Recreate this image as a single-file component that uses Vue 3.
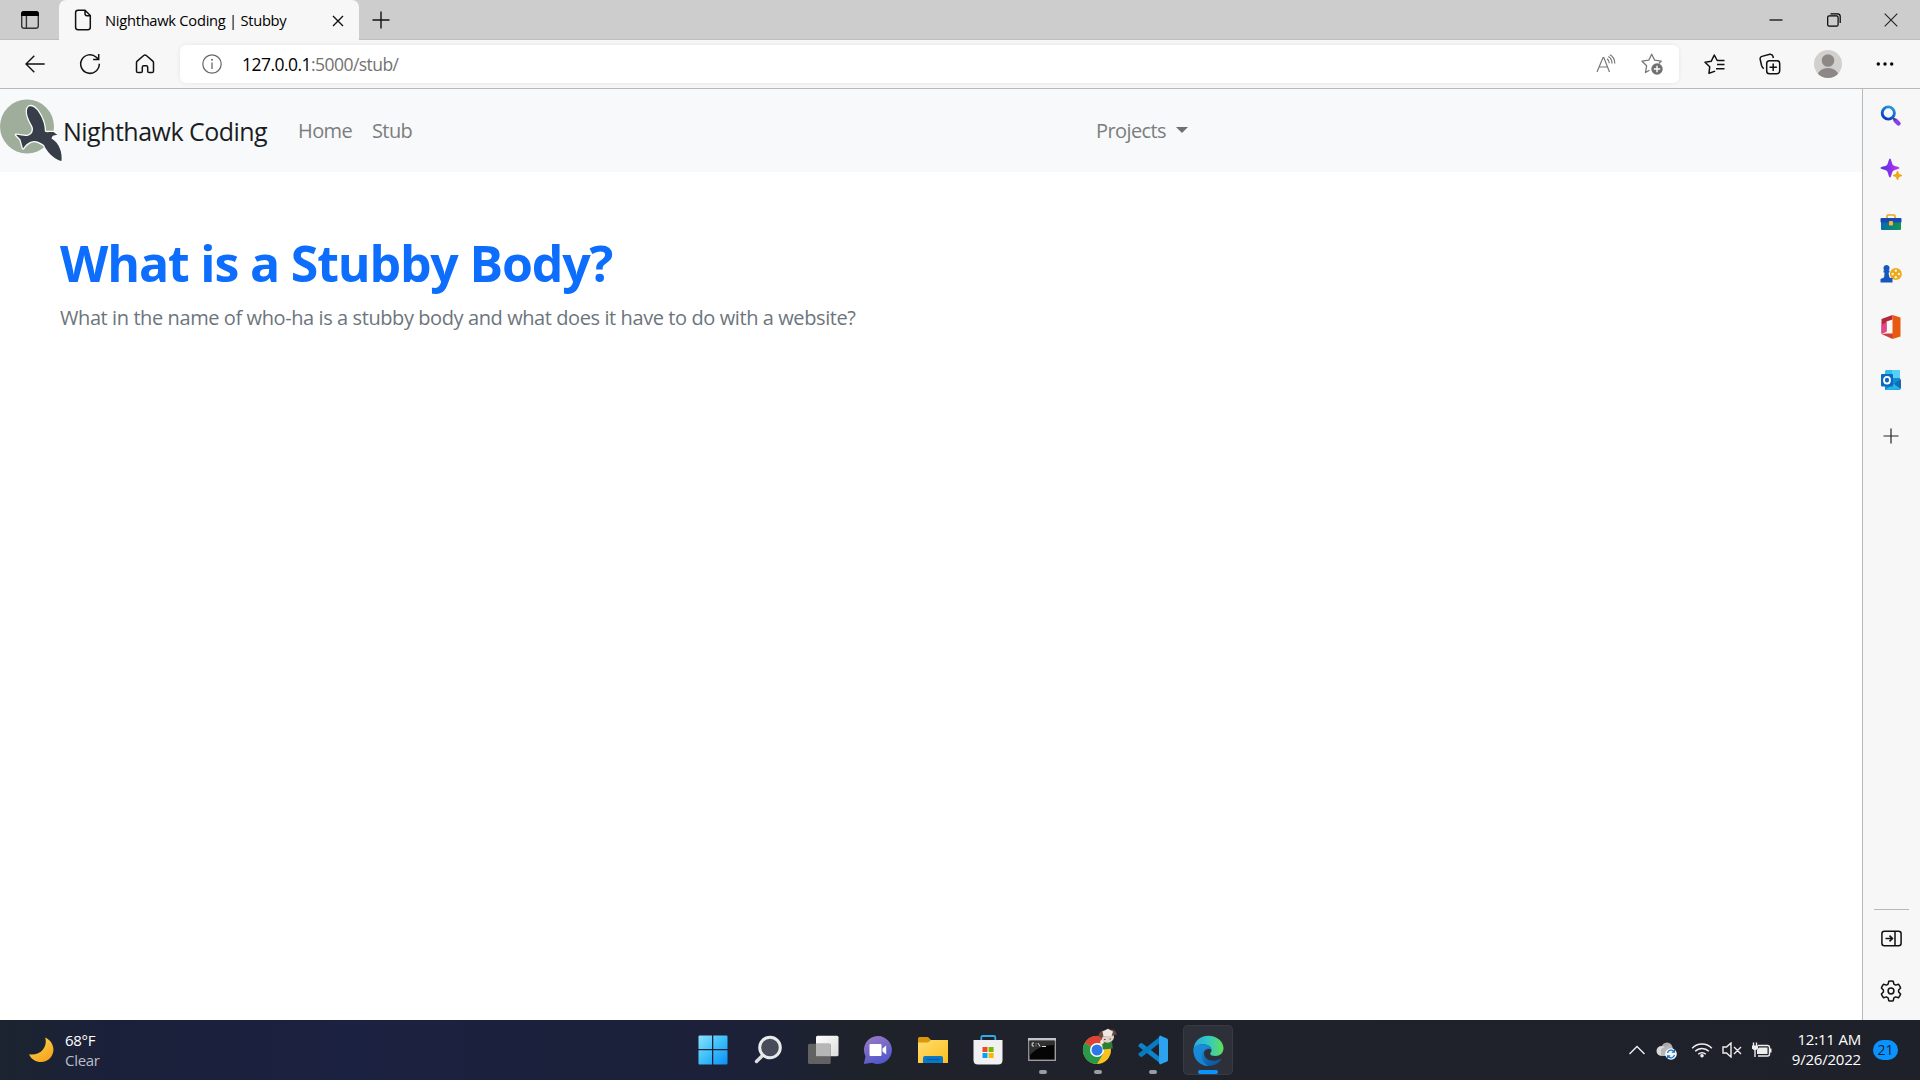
<script setup>
const navLinks = ['Home', 'Stub']
</script>

<template>
  <div class="screen">
    <header class="titlebar">
      <button class="tab-actions" aria-label="Tab actions">
        <svg width="20" height="20" viewBox="0 0 20 20"><rect x="1.7" y="1.7" width="16.6" height="16.6" rx="2.6" fill="none" stroke="#333" stroke-width="1.4"/><path d="M1 6V4a3 3 0 0 1 3-3h12a3 3 0 0 1 3 3v2z" fill="#000"/><path d="M6.4 6v12" stroke="#333" stroke-width="1.4"/></svg>
      </button>
      <div class="tab">
        <svg class="page-icon" width="18" height="22" viewBox="0 0 18 22"><path d="M4 1.2h7l5.3 5.3v11.8a2.4 2.4 0 0 1-2.4 2.4H4a2.4 2.4 0 0 1-2.4-2.4V3.6A2.4 2.4 0 0 1 4 1.2M11 1.5v3.3a1.9 1.9 0 0 0 1.9 1.9h3.2" fill="none" stroke="#111" stroke-width="1.5"/></svg>
        <span class="tab-title">Nighthawk Coding | Stubby</span>
        <svg class="tab-close" width="12" height="12" viewBox="0 0 12 12"><path d="M1 1l10 10M11 1L1 11" stroke="#111" stroke-width="1.4"/></svg>
      </div>
      <svg class="new-tab" width="18" height="18" viewBox="0 0 18 18"><path d="M9 .5v17M.5 9h17" stroke="#111" stroke-width="1.4"/></svg>
      <div class="window-buttons">
        <span><svg width="14" height="14" viewBox="0 0 14 14"><path d="M.5 7h13" stroke="#000" stroke-width="1.2"/></svg></span>
        <span><svg width="14" height="14" viewBox="0 0 14 14"><rect x=".7" y="2.8" width="10.4" height="10.4" rx="1.5" fill="none" stroke="#000" stroke-width="1.2"/><path d="M3.5 .8H10.5a2.7 2.7 0 0 1 2.7 2.7V10" fill="none" stroke="#000" stroke-width="1.2"/></svg></span>
        <span><svg width="14" height="14" viewBox="0 0 14 14"><path d="M.7.7l12.6 12.6M13.3.7L.7 13.3" stroke="#222" stroke-width="1.1"/></svg></span>
      </div>
    </header>

    <div class="toolbar">
      <div class="tools">
        <span><svg width="20" height="18" viewBox="0 0 20 18"><path d="M9.3 .8L1 9l8.3 8.2M1.2 9H19.7" fill="none" stroke="#111" stroke-width="1.4"/></svg></span>
        <span><svg width="22" height="22" viewBox="0 0 22 22"><path d="M20.3 10.8A9.3 9.3 0 1 1 17.3 4.2L19.5 6.3M19.7 1v5.6h-5.6" fill="none" stroke="#111" stroke-width="1.5"/></svg></span>
        <span><svg width="20" height="20" viewBox="0 0 20 20"><path d="M1.5 8.6a2 2 0 0 1 .7-1.5L8.7 1.5a2 2 0 0 1 2.6 0l6.5 5.6a2 2 0 0 1 .7 1.5v8.6a1.4 1.4 0 0 1-1.4 1.4h-3a1.4 1.4 0 0 1-1.4-1.4v-4a1.5 1.5 0 0 0-1.5-1.5H8.8a1.5 1.5 0 0 0-1.5 1.5v4a1.4 1.4 0 0 1-1.4 1.4h-3a1.4 1.4 0 0 1-1.4-1.4z" fill="none" stroke="#111" stroke-width="1.5"/></svg></span>
      </div>
      <div class="address">
        <svg class="info" width="20" height="20" viewBox="0 0 20 20"><circle cx="10" cy="10" r="9.2" fill="none" stroke="#666" stroke-width="1.2"/><circle cx="10" cy="5.8" r="1" fill="#666"/><path d="M10 8.5V15" stroke="#666" stroke-width="1.3"/></svg>
        <span class="url"><b>127.0.0.1</b>:5000/stub/</span>
        <svg class="read" width="20" height="20" viewBox="0 0 20 20"><path d="M1 18L7 3.5h.8L13.5 18M3.2 13H11.3M11 4.800c1.500 1 2.300 2.600 2.300 4.500M12.300 2.500c2.600 1.400 3.700 4 3.700 7M13.800.7c3.500 1.700 5 5 5 8.800" fill="none" stroke="#777" stroke-width="1.2"/></svg>
        <svg class="fav" width="22" height="22" viewBox="0 0 22 22"><path d="M8.5 17.2L4.500 19.5 5.6 12.8 1 8.2 7.7 7.2 10.7 1.2 13.7 7.2 20.2 8.2 17.8 10.4" fill="none" stroke="#777" stroke-width="1.3" stroke-linejoin="round"/><circle cx="16" cy="16" r="5.7" fill="#707070"/><path d="M16 12.8v6.4M12.8 16h6.4" stroke="#fff" stroke-width="1.4"/></svg>
      </div>
      <div class="tools right">
        <span><svg width="21" height="20" viewBox="0 0 21 20"><path d="M11.2 17.1L5 19.2 5.7 12.8 1 8.2 7.3 7.2 10.3 1 13.2 6.5H20.5M13 10.6H20.5M12 14.7h8.5" fill="none" stroke="#111" stroke-width="1.5" stroke-linejoin="round"/></svg></span>
        <span class="collections"><svg width="22" height="22" viewBox="0 0 22 22"><rect x="7.7" y="7.7" width="13" height="13" rx="2.8" fill="none" stroke="#111" stroke-width="1.5"/><path d="M14.2 10.5v7.4M10.5 14.2h7.4M4.9 15.6C3.5 15 3 14 2.6 12.5L1.2 6.5C.8 5 1.5 3.8 3 3.4L10.8 1.2C12.3 1 13.5 1.8 14 3.3L14.3 5" fill="none" stroke="#111" stroke-width="1.5"/></svg></span>
        <span class="wide"><svg width="28" height="28" viewBox="0 0 28 28"><defs><clipPath id="avatar"><circle cx="14" cy="14" r="14"/></clipPath></defs><g clip-path="url(#avatar)"><rect width="28" height="28" fill="#d2d0ce"/><circle cx="14" cy="10.5" r="6.3" fill="#8d8885"/><ellipse cx="14" cy="26" rx="10.5" ry="8" fill="#8d8885"/></g></svg></span>
        <span><svg width="18" height="6" viewBox="0 0 18 6"><circle cx="2.3" cy="3" r="1.7"/><circle cx="9" cy="3" r="1.7"/><circle cx="15.7" cy="3" r="1.7"/></svg></span>
      </div>
    </div>

    <div class="content">
      <main class="page">
        <nav class="navbar">
          <svg class="logo" width="63" height="63" viewBox="0 0 63 63"><circle cx="27" cy="27.500" r="27" fill="#9eae9a"/><path d="M29 7.500C26.500 9 26.200 14 28.500 19.500 30 24 32.500 26 33 29.500 33 33 32 35.500 28 36.800 24 37.500 21 36 16 35.800L20.500 40.500 23 49.500C25.500 46 28 43 33.500 42 37 41.700 41 44 44 46 47 53 54 60.500 61.500 62 62.500 54 59.500 44 51.500 39.500 52 36.500 54 35.800 57.500 36 L53.500 33 C49 32.700 47 33.800 44.800 32.500 45 25 42 18 37.500 11.500 34.500 8 31 6.500 29 7.500z" fill="#373e4a" stroke="#fafcfb" stroke-width="2.600" paint-order="stroke" stroke-linejoin="round"/></svg>
          <span class="brand">Nighthawk Coding</span>
          <span v-for="link in navLinks" :key="link" class="nav-link" :class="link.toLowerCase()">{{ link }}</span>
          <span class="nav-link projects">Projects</span>
          <i class="caret"></i>
        </nav>
        <section class="body">
          <h1>What is a Stubby Body?</h1>
          <p>What in the name of who-ha is a stubby body and what does it have to do with a website?</p>
        </section>
      </main>

      <aside class="sidebar">
        <span class="side"><svg width="22" height="22" viewBox="0 0 22 22"><defs><linearGradient id="lens" x1=".8" y1="0" x2=".3" y2="1"><stop stop-color="#2a9bd8"/><stop offset="1" stop-color="#0838c8"/></linearGradient></defs><path d="M15.500 15.500L18.500 18.500" stroke="#8b3df0" stroke-width="4.400" stroke-linecap="round"/><path d="M12.500 12.500l2.800 2.800" stroke="#444" stroke-width="2"/><circle cx="8.300" cy="8" r="6.100" fill="#f3f8ff" stroke="url(#lens)" stroke-width="2.900"/></svg></span>
        <span class="side"><svg width="24" height="24" viewBox="0 0 24 24"><defs><linearGradient id="spark"><stop stop-color="#4a2ee5"/><stop offset="1" stop-color="#c436ef"/></linearGradient></defs><path d="M11 1.500C12.300 1.500 12.700 6.500 14 8c1.500 1.500 6.500 1.700 6.500 3s-5 1.500-6.500 3c-1.300 1.500-1.700 6.500-3 6.500S9.300 15.500 8 14c-1.500-1.500-6.500-1.700-6.500-3S6.500 9.500 8 8c1.300-1.500 1.700-6.500 3-6.500z" fill="url(#spark)"/><path d="M18.500 14l1.200 3.300L23 18.500l-3.300 1.200-1.200 3.300-1.200-3.300-3.300-1.200 3.300-1.200z" fill="#f0a810" stroke="#f0a810" stroke-linejoin="round"/></svg></span>
        <span class="side"><svg width="22" height="20" viewBox="0 0 22 20"><defs><linearGradient id="box"><stop stop-color="#086bb2"/><stop offset="1" stop-color="#139550"/></linearGradient></defs><path d="M7 6V4q0-1 1-1h6q1 0 1 1v2" fill="none" stroke="#efa61b" stroke-width="1.600"/><rect x="1" y="8" width="20" height="10" rx="1" fill="url(#box)"/><rect x=".5" y="6" width="21" height="4.500" rx="1" fill="#1948b5"/><rect x="9" y="9" width="4" height="4.500" rx="1" fill="#ffb72b"/></svg></span>
        <span class="side"><svg width="22" height="20" viewBox="0 0 22 20"><circle cx="15.800" cy="10" r="6" fill="#eba91d"/><g fill="#fff3c5"><circle cx="15.800" cy="6.700" r="1.200"/><circle cx="15.800" cy="13.300" r="1.200"/><circle cx="12.700" cy="10" r="1.200"/><circle cx="18.900" cy="10" r="1.200"/></g><path d="M6.500 1a3.200 3.200 0 0 1 2 5.600h1v2H8.600Q8.700 12 10 14h2.500v4.500H.5V15L4 13.500Q4.500 11 4.500 8.600h-1v-2h1A3.200 3.200 0 0 1 6.500 1z" fill="#1557bd"/></svg></span>
        <span class="side"><svg width="22" height="26" viewBox="0 0 22 26"><path d="M12.500 1L1.500 5v14.500l5-2V7.500l6-2z" fill="#b32737"/><path d="M1.500 11v9l5-2.300V8z" fill="#e24592"/><path d="M1.500 20L12.500 25 14 19.500H6.500z" fill="#cf3c3a"/><path d="M12.500 1L20.500 3.500v19L12.500 25z" fill="#e85a11"/></svg></span>
        <span class="side"><svg width="22" height="22" viewBox="0 0 22 22"><path d="M6 1h13q1 0 1 1v9H5V2z" fill="#35b8ee"/><path d="M12 1h8v9h-8z" fill="#54d0f7"/><path d="M5 9h15v11q0 1-1 1H5z" fill="#1489d6"/><path d="M14 15l7-5v10z" fill="#136dad"/><path d="M14 15l7 5.500-16 .5z" fill="#27b4ed"/><rect x="1" y="5" width="12" height="12.500" rx="1" fill="#0c69bd"/><ellipse cx="7" cy="11.200" rx="3" ry="3.300" fill="none" stroke="#fff" stroke-width="1.800"/></svg></span>
        <span class="side add"><svg width="16" height="16" viewBox="0 0 16 16"><path d="M8 .5v15M.5 8h15" stroke="#222" stroke-width="1.200"/></svg></span>
        <div class="side-bottom">
          <span class="side"><svg width="21" height="17" viewBox="0 0 21 17"><rect x=".9" y="1.200" width="19.200" height="14.500" rx="2.500" fill="none" stroke="#111" stroke-width="1.500"/><path d="M14 1v15M4.500 8.500h7M8.500 5.600l3 2.900-3 2.900" fill="none" stroke="#111" stroke-width="1.500"/></svg></span>
          <span class="side"><svg width="22" height="22" viewBox="0 0 22 22"><path d="M8.800 1.300Q11 .8 13.200 1.300L13.900 4.100 15.600 5.100 18.500 4.300Q20 6 20.600 8L18.600 10 V12L20.600 14Q20 16 18.500 17.700L15.600 16.900 13.900 17.900 13.200 20.700Q11 21.200 8.800 20.700L8.100 17.900 6.400 16.900 3.500 17.700Q2 16 1.400 14L3.400 12V10L1.400 8Q2 6 3.500 4.300L6.400 5.100 8.100 4.100z" fill="none" stroke="#111" stroke-width="1.500" stroke-linejoin="round"/><circle cx="11" cy="11" r="2.900" fill="none" stroke="#111" stroke-width="1.500"/></svg></span>
        </div>
      </aside>
    </div>

    <footer class="taskbar">
      <div class="weather">
        <svg width="26" height="26" viewBox="0 0 26 26"><defs><linearGradient id="moon" x1="0" y1="0" x2=".7" y2="1"><stop stop-color="#ffd75a"/><stop offset="1" stop-color="#f6a51a"/></linearGradient></defs><path d="M17.200 .5C25 4 28 13 23 20 17.500 27.500 5 26.500 1 17.200 6 18.200 12 16.500 15 12.500 18 8.500 18.300 4.500 17.200 .5z" fill="url(#moon)"/></svg>
        <div class="weather-text"><span>68°F</span><span class="dim">Clear</span></div>
      </div>
      <div class="apps">
        <span class="app"><svg width="30" height="30" viewBox="0 0 30 30"><defs><linearGradient id="win" x1="0" y1="0" x2="1" y2="1"><stop stop-color="#8ae3fa"/><stop offset=".5" stop-color="#3cbefa"/><stop offset="1" stop-color="#0b8ff5"/></linearGradient></defs><path d="M1.500 .5H14V14H.5V1.500q0-1 1-1zM15.300.5H28.500q1 0 1 1V14H15.300zM.5 15.300H14V29.500H1.500q-1 0-1-1zM15.300 15.300H29.500V28.500q0 1-1 1H15.300z" fill="url(#win)"/></svg></span>
        <span class="app"><svg width="30" height="30" viewBox="0 0 30 30"><path d="M10.500 19.500L3.500 26.500" stroke="#dcdfe2" stroke-width="3.400" stroke-linecap="round"/><circle cx="17" cy="12.500" r="10.300" fill="#484c5a" stroke="#e9eaec" stroke-width="3"/></svg></span>
        <span class="app"><svg width="32" height="30" viewBox="0 0 32 30"><defs><linearGradient id="pane" x1="0" y1="0" x2="1" y2="1"><stop stop-color="#fff"/><stop offset="1" stop-color="#dcdcdc"/></linearGradient></defs><rect x="9" y=".7" width="22.500" height="20.500" rx="1.500" fill="url(#pane)"/><rect x="1" y="8.700" width="22.700" height="20.300" rx="1.500" fill="#626262"/><path d="M9 8.700h14.700v12.500H9z" fill="#b6b6b6"/></svg></span>
        <span class="app"><svg width="30" height="30" viewBox="0 0 30 30"><defs><linearGradient id="chat" x1=".2" y1="0" x2=".6" y2="1"><stop stop-color="#9878c5"/><stop offset="1" stop-color="#5058cc"/></linearGradient></defs><path d="M15 1a14 14 0 1 1-5.800 26.800L.8 29 2.500 21.500A14 14 0 0 1 15 1z" fill="url(#chat)"/><rect x="6.500" y="9" width="12" height="12" rx="1" fill="#fff"/><path d="M19.500 13.500l3.700-3v9l-3.700-3z" fill="#fff"/></svg></span>
        <span class="app"><svg width="30" height="30" viewBox="0 0 30 30"><defs><linearGradient id="folder" x1="0" y1="0" x2="1" y2="1"><stop stop-color="#ffdc70"/><stop offset="1" stop-color="#fcbf1e"/></linearGradient></defs><path d="M0 10V3.500Q0 2 1.500 2H10l3 3h15q2 0 2 2v4z" fill="#dc9609"/><path d="M0 7.500h10l3-2.500H30V28H0z" fill="url(#folder)"/><path d="M5 28v-5q0-2 2-2h16q2 0 2 2v5z" fill="#0878c8"/><path d="M8.500 24.500h13" stroke="#075a9b" stroke-width="1.200"/></svg></span>
        <span class="app"><svg width="30" height="30" viewBox="0 0 30 30"><path d="M8.300 6V2.500q0-1.500 1.500-1.500h11q1.500 0 1.500 1.500V6" fill="none" stroke="#29aee8" stroke-width="1.800"/><path d="M.5 5H29.500V25q0 4.500-4.500 4.500H5Q.5 29.500.5 25z" fill="#f1f1f1"/><path d="M9.500 12h5v5h-5z" fill="#ef4b22"/><path d="M15.600 12h5v5h-5z" fill="#7ab800"/><path d="M9.500 18h5v5h-5z" fill="#05a4ed"/><path d="M15.600 18h5v5h-5z" fill="#fcb800"/></svg></span>
        <span class="app open"><svg class="console" width="30" height="30" viewBox="0 0 30 30"><rect x="1.800" y="3.800" width="26.500" height="21.500" fill="#050505" stroke="#9b9da0" stroke-width="1.400"/><path d="M1 4.300h28" stroke="#c1c4c8" stroke-width="2.600"/><path d="M2.500 5.800h25V10Q12 10 4 19l-1.500 2z" fill="#303030"/><path d="M7 8H5.200v3H7M9 8.500v.7M9 10.500v.7M11 8l2 3.500M15 11.500h4" stroke="#ddd" stroke-width="1" fill="none"/></svg></span>
        <span class="app open"><svg class="chrome" width="36" height="38" viewBox="0 0 36 38"><circle cx="15" cy="23" r="14" fill="#fbc120"/><path d="M15 23L2.800 16A14 14 0 0 1 27.200 16H15z" fill="#dc4335"/><path d="M15 23l6.300 3.500L15 37A14 14 0 0 1 2.800 16z" fill="#29984a"/><circle cx="15" cy="23" r="7" fill="#fff"/><circle cx="15" cy="23" r="5.500" fill="#2f76e8"/><path d="M20 15.500l10-.5.800 6.500-10 1z" fill="#2a8136"/><circle cx="20" cy="15" r="1.900" fill="#eee"/><ellipse cx="25.500" cy="10" rx="6.500" ry="5.800" fill="#e0d2c9"/><path d="M16.500 8.500Q17.500 3.500 22 3.500L31 2.500Q34.500 4 34.500 8L31.500 7.500 30.500 9 21 9.500 19.500 12z" fill="#6b493c"/><path d="M20.500 4.500L26 1.800 31 4.500 29.500 9.500 21.500 9.500z" fill="#efe9e4"/><path d="M22 12.500h1.500M27.500 12h1.500" stroke="#6b493c" stroke-width="1.200"/></svg></span>
        <span class="app open"><svg width="30" height="30" viewBox="0 0 30 30"><path d="M.5 10L2.500 8.300q1-.5 2 .2L23 23v6L.5 11.500z" fill="#0f83c9"/><path d="M.5 20l2 1.800q1 .5 2-.2L23 7V.8L.5 18.500z" fill="#087bbf"/><path d="M22 .5L29 3.500q1 .5 1 1.500V25q0 1-1 1.500L22 29.500 21 28V2z" fill="#2ba3ee"/></svg></span>
        <span class="app open active"><svg width="31" height="31" viewBox="0 0 31 31"><defs><linearGradient id="edgeTop"><stop stop-color="#28a9df"/><stop offset=".5" stop-color="#34c8c4"/><stop offset="1" stop-color="#62df55"/></linearGradient><linearGradient id="edgeLow" x1="0" y1="0" x2="1" y2="1"><stop stop-color="#1a93dc"/><stop offset="1" stop-color="#0b4f96"/></linearGradient></defs><path d="M.6 14C1 6.500 7 .7 15.300 .7 24 .7 30.500 6.500 30.500 13c0 5-3.500 8-8 8-3.200 0-5.300-1-5.300-2.300 0-.8 1.300-1.500 1.300-3.700C18.500 11.500 14 9.300 9.500 9.300 5 9.300 2 11.500.6 14z" fill="url(#edgeTop)"/><path d="M.5 15.500c0-4 4-6.200 9-6.200 4.500 0 8.500 2 9 5.500-1.500-1.500-7-1.500-7.500 3-.3 6.500 7.500 10.500 16.500 6.200q1.200-.2.700.8C25 29 20.500 31 15.500 31 7 31 .5 24 .5 15.500z" fill="url(#edgeLow)"/><path d="M11.500 14.500C7.500 17.500 7.500 27 15.500 31 7 31 .5 24 .5 15.500c0-4 3-6 8-6.200 5 0 8.500 2 9.500 4.200-2-1-4.500-.8-6.500 1z" fill="#198edb" opacity=".75"/></svg></span>
      </div>
      <div class="tray">
        <svg class="t-up" width="18" height="10" viewBox="0 0 18 10"><path d="M1.500 9L9 1.500 16.500 9" fill="none" stroke="#eee" stroke-width="1.400"/></svg>
        <svg class="t-cloud" width="22" height="18" viewBox="0 0 22 18"><circle cx="11" cy="6" r="5.500" fill="#aaa"/><circle cx="5.500" cy="9" r="5" fill="#d9d9d9"/><path d="M5 7L13 3Q17 4 17 8L13 14H5z" fill="#b6b6b6"/><circle cx="15" cy="12" r="5.800" fill="#f5f9fd"/><path d="M11.500 11a3.700 3.700 0 0 1 6.700-1.200M18.500 13a3.700 3.700 0 0 1-6.700 1.200M18.500 7.500v2.700h-2.700M11.500 16.500v-2.700h2.700" fill="none" stroke="#1a74c7" stroke-width="1.200"/></svg>
        <svg class="t-wifi" width="22" height="16" viewBox="0 0 22 16"><path d="M1.200 6.200a13.500 13.500 0 0 1 19.600 0M4.200 9.300a9.500 9.500 0 0 1 13.600 0M7.200 12.200a5.400 5.400 0 0 1 7.600 0" fill="none" stroke="#eee" stroke-width="1.500"/><circle cx="11" cy="13.700" r="1.800" fill="#eee"/></svg>
        <svg class="t-sound" width="20" height="16" viewBox="0 0 20 16"><path d="M1 5h3.500L9 1v14l-4.500-4H1zM12 5l7 7M19 5l-7 7" fill="none" stroke="#eee" stroke-width="1.400"/></svg>
        <svg class="t-battery" width="22" height="18" viewBox="0 0 22 18"><path d="M7 4.500h9.500q2 0 2 2v6.500q0 2-2 2H7" fill="none" stroke="#eee" stroke-width="1.400"/><path d="M8 6.500h8.500v6.500H6V9zM18.500 7.500h2v4h-2zM1 4.500h6v3.200L5 9H3L1 7.700z" fill="#eee"/><path d="M2.500 1.500v4M5.500 1.500v4M4 8v8" stroke="#eee" stroke-width="1.400"/></svg>
        <div class="clock"><span class="time">12:11 AM</span><span class="date">9/26/2022</span></div>
        <span class="badge">21</span>
      </div>
    </footer>
  </div>
</template>

<style>
body { margin: 0; overflow: hidden; }
</style>

<style scoped>
* { box-sizing: border-box; }
svg { display: block; flex: none; }
.screen { width: 1920px; height: 1080px; display: flex; flex-direction: column; overflow: hidden; background: #fff; font-family: "Open Sans", "Noto Sans", sans-serif; color: #000; }
.screen span { white-space: nowrap; }
.titlebar { height: 40px; flex: none; display: flex; align-items: center; background: #cdcdcd; box-shadow: inset 0 -1px #bdbdbd; }
.tab-actions { width: 59px; height: 39px; padding: 0 0 0 20px; border: 0; background: transparent; }
.tab { width: 300px; height: 40px; display: flex; align-items: center; background: #f7f7f7; border-radius: 7px 7px 0 0; padding-left: 15px; }
.tab-title { margin: -1px 0 0 13px; width: 227px; font-size: 14.7px; line-height: 20px; letter-spacing: -.27px; }
.tab-close { margin-top: 1px; }
.new-tab { margin-left: 13px; }
.window-buttons { margin-left: auto; display: flex; }
.window-buttons span { width: 57.5px; display: flex; justify-content: center; }
.toolbar { height: 48px; flex: none; display: flex; align-items: center; background: #f7f7f7; padding: 0 7.5px; }
.tools { display: flex; width: 165px; align-items: center; }
.tools span { width: 55px; flex: none; display: flex; justify-content: center; }
.tools .wide { width: 61px; padding-left: 1px; }
.tools .collections { padding-left: 1px; }
.tools.right { width: 226px; }
.address { width: 1500px; height: 38px; margin: 0 7.5px; border-radius: 6px; background: #fff; box-shadow: 0 0 4px rgba(0,0,0,.08); display: flex; align-items: center; padding-left: 22px; }
.url { width: 1354px; margin: -1px 0 0 20px; font-size: 17.5px; line-height: 24px; color: #737373; letter-spacing: -.54px; }
.url b { font-weight: 400; color: #000; }
.fav { margin-left: 25px; }
.content { height: 932px; display: flex; background: #f7f7f7; border-top: 1px solid #b8b8b8; }
.page { width: 1863px; background: #fff; border-right: 1px solid #b8b8b8; }
.navbar { height: 83px; display: flex; align-items: center; background: #f8f9fb; }
.logo { margin-top: -1px; }
.brand { width: 235px; font-size: 25px; line-height: 38px; color: #1b1d1f; letter-spacing: -.52px; }
.nav-link { font-size: 20px; line-height: 30px; color: #7c7d7e; letter-spacing: -.6px; }
.home { width: 74px; }
.stub { width: 724px; }
.caret { margin-left: 10px; margin-top: -1px; border: 6px solid transparent; border-top-color: #6f7071; border-bottom: 0; }
.body { padding: 61px 60px; }
h1 { margin: 0; font-size: 50px; line-height: 60px; font-weight: 700; color: #0d6efd; letter-spacing: -1.16px; white-space: nowrap; }
p { margin: 10px 0 0; font-size: 20px; line-height: 30px; color: #6c757d; letter-spacing: -.41px; white-space: nowrap; }
.sidebar { width: 56px; display: flex; flex-direction: column; align-items: center; padding-top: 1px; }
.side { height: 52.7px; flex: none; display: flex; align-items: center; justify-content: center; }
.add { height: 60px; }
.side-bottom { margin-top: auto; width: 35px; height: 111px; border-top: 1px solid #b8b8b8; padding-top: 2px; }
.taskbar { height: 60px; flex: none; display: flex; align-items: center; color: #fff; background: linear-gradient(90deg, #1c242f 0, #1b203a 110px, #1b2140 350px, #1c2138 750px, #1e2229 870px, #20222b 1000px, #1e212a); }
.weather { width: 685px; display: flex; align-items: center; padding-left: 28px; }
.weather-text { display: flex; flex-direction: column; margin-left: 11px; font-size: 15px; line-height: 20px; letter-spacing: -.3px; }
.dim { color: #b9bdc9; }
.apps { width: 550px; display: flex; }
.app { width: 55px; height: 60px; position: relative; display: flex; align-items: center; justify-content: center; }
.chrome { margin: -9px 0 0 5px; }
.console { margin-right: 1px; }
.open::after { content: ""; position: absolute; bottom: 6px; left: 23.5px; width: 8px; height: 4px; border-radius: 2px; background: #9a9ca1; }
.active { width: 50px; height: 50px; margin: 5px 2px 5px 3px; border-radius: 5px; background: #2d3039; box-shadow: inset 0 0 0 1px #383b44; }
.active::after { bottom: 1px; left: 15px; width: 20px; background: #0a93ff; }
.tray { flex: 1; display: flex; align-items: center; padding-left: 393px; }
.t-cloud { margin-left: 10px; margin-top: 2px; }
.t-wifi { margin-left: 13px; }
.t-sound { margin-left: 9px; }
.t-battery { margin-left: 9px; margin-top: -1px; }
.clock { width: 88px; margin-top: -2px; display: flex; flex-direction: column; align-items: flex-end; font-size: 15px; line-height: 20px; letter-spacing: -.2px; }
.badge { width: 25px; height: 20px; margin-left: 12px; border-radius: 10px; background: #0a93ff; color: #10233b; font-size: 14px; line-height: 20px; text-align: center; }
</style>
